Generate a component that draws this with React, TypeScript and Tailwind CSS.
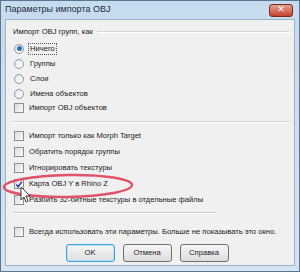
import React from 'react';

const font = { fontFamily: '"Liberation Sans", "DejaVu Sans", sans-serif' };

const Radio = ({ checked, label, focus }: { checked?: boolean; label: string; focus?: boolean }) => (
  <div className="flex items-center h-[15px]">
    <span className="w-[10px] h-[10px] rounded-full border border-[#8a9aa8] bg-gradient-to-br from-[#e4e8ec] to-[#ffffff] flex items-center justify-center shrink-0">
      {checked && <span className="w-[5px] h-[5px] rounded-full bg-[#2f6fb8]" />}
    </span>
    <span className={`ml-[5px] leading-[10px] px-[1px] ${focus ? 'outline outline-1 outline-dotted outline-[#555]' : ''}`}>{label}</span>
  </div>
);

const Check = ({ checked, label }: { checked?: boolean; label: string }) => (
  <div className="flex items-center h-[16px] whitespace-nowrap">
    <span className="w-[10px] h-[10px] border border-[#8f8f8f] bg-gradient-to-br from-[#dcdcdc] to-[#fbfbfb] flex items-center justify-center shrink-0">
      {checked && (
        <svg width="9" height="9" viewBox="0 0 9 9">
          <path d="M1.5 4.5 L3.5 7 L7.8 1.2" stroke="#1f3f9a" strokeWidth="1.6" fill="none" />
        </svg>
      )}
    </span>
    <span className="ml-[5px]">{label}</span>
  </div>
);

const Btn = ({ label, primary }: { label: string; primary?: boolean }) => (
  <div
    className={`w-[49px] h-[18px] rounded-[3px] flex items-center justify-center bg-gradient-to-b from-[#f6f6f6] to-[#dedede] ${
      primary ? 'border border-[#3c9fd6] shadow-[inset_0_0_0_1px_#b9e3f7]' : 'border border-[#707070]'
    }`}
  >
    {label}
  </div>
);

export default function App() {
  return (
    <div style={font} className="relative w-[300px] h-[272px] bg-gradient-to-b from-[#c7dbef] to-[#d4e3f1] border border-[#5d7793] flex flex-col text-[7.6px] text-[#1a1a1a]">
      <div className="h-[18px] flex items-center justify-between pl-[4px] pr-[6px]">
        <span className="text-[9px] text-[#1e2b3a]">Параметры импорта OBJ</span>
        <span className="w-[24px] h-[13px] rounded-[3px] bg-gradient-to-b from-[#e3a091] to-[#c6412c] border border-[#7a2b22] flex items-center justify-center text-white text-[9px] font-bold">
          ✕
        </span>
      </div>
      <div className="mx-[4px] mb-[5px] flex-1 bg-[#f0f0f0] border border-[#9fb3c7] flex flex-col pl-[7px] pr-[5px]">
        <div className="flex items-center h-[12px] mt-[6px]">
          <span>Импорт OBJ групп, как</span>
          <span className="flex-1 ml-[4px] border-t border-[#d5d5d5] border-b-white border-b" />
        </div>
        <div className="mt-[3px] pl-[1px]">
          <Radio checked focus label="Ничего" />
          <Radio label="Группы" />
          <Radio label="Слои" />
          <Radio label="Имена объектов" />
          <div className="h-[14px] flex items-center">
            <Check label="Импорт OBJ объектов" />
          </div>
        </div>
        <div className="mt-[6px] h-[2px] border-t border-[#d0d0d0] border-b border-b-white" />
        <div className="mt-[5px] pl-[1px]">
          <Check label="Импорт только как Morph Target" />
          <Check label="Обратить порядок группы" />
          <Check label="Игнорировать текстуры" />
          <Check checked label="Карта OBJ Y в Rhino Z" />
          <Check label="Разбить 32-битные текстуры в отдельные файлы" />
        </div>
        <div className="mt-[4px] w-[204px] h-[2px] border-t border-[#d0d0d0] border-b border-b-white" />
        <div className="mt-[10px] pl-[1px]">
          <Check label="Всегда использовать эти параметры. Больше не показывать это окно." />
        </div>
        <div className="mt-[4px] flex justify-center gap-[8px] pr-[8px]">
          <Btn primary label="OK" />
          <Btn label="Отмена" />
          <Btn label="Справка" />
        </div>
      </div>
      <svg className="absolute left-0 top-0 pointer-events-none" width="300" height="272">
        <ellipse cx="67" cy="185" rx="64" ry="11" fill="none" stroke="#e0516a" strokeWidth="2.5" transform="rotate(-1 67 185)" />
        <path d="M20 186 L20 199 L23 196 L25 201 L27 200 L25 195 L29 195 Z" fill="#fff" stroke="#111" strokeWidth="0.8" />
      </svg>
    </div>
  );
}
